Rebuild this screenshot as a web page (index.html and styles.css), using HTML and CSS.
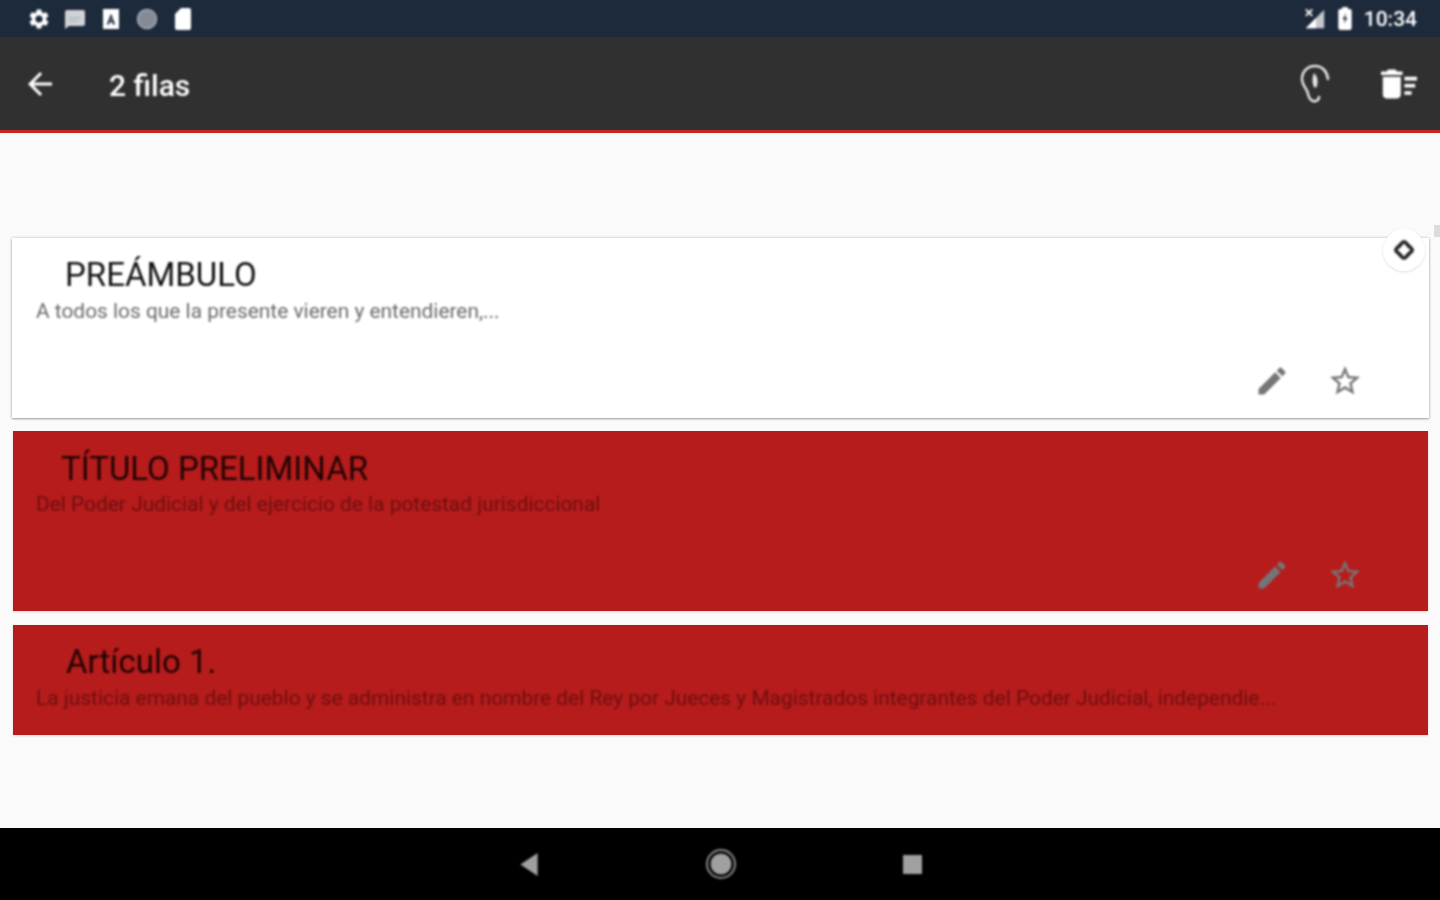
FILE: index.html
```html
<!DOCTYPE html>
<html lang="es">
<head>
    <meta charset="utf-8">
    <meta name="viewport" content="width=device-width, initial-scale=1">
    <title>2 filas</title>
    <link rel="stylesheet" href="styles.css">
</head>
<body>
<div class="screen">

    <div class="statusBar">
        <div class="statusIcons">
            <svg class="statusIcon" viewBox="0 0 24 24"><path fill="#fff" d="M19.14 12.94c.04-.3.06-.61.06-.94s-.02-.64-.07-.94l2.03-1.58a.49.49 0 0 0 .12-.61l-1.92-3.32a.49.49 0 0 0-.59-.22l-2.39.96a7 7 0 0 0-1.62-.94l-.36-2.54a.48.48 0 0 0-.48-.41h-3.84a.47.47 0 0 0-.47.41l-.36 2.54c-.59.24-1.13.57-1.62.94l-2.39-.96a.48.48 0 0 0-.59.22L2.74 8.87a.47.47 0 0 0 .12.61l2.03 1.58c-.05.3-.09.63-.09.94s.02.64.07.94l-2.03 1.58a.49.49 0 0 0-.12.61l1.92 3.32c.12.22.37.29.59.22l2.39-.96c.5.38 1.03.7 1.62.94l.36 2.54c.05.24.24.41.48.41h3.84c.24 0 .44-.17.47-.41l.36-2.54c.59-.24 1.13-.56 1.62-.94l2.39.96c.22.08.47 0 .59-.22l1.92-3.32a.47.47 0 0 0-.12-.61l-2.01-1.58zM12 15.6A3.6 3.6 0 1 1 12 8.4a3.6 3.6 0 0 1 0 7.2z"/></svg>
            <svg class="statusIcon" viewBox="0 0 24 24"><path fill="#cfd2d6" d="M4 3h16c1.1 0 2 .9 2 2v12c0 1.1-.9 2-2 2H6l-4 3V5c0-1.1.9-2 2-2z"/><path fill="#b4b8be" d="M6 10h12v1.5H6zM6 13h9v1.5H6z"/></svg>
            <svg class="statusIcon" viewBox="0 0 24 24"><path fill="#fff" d="M4 2h16v20H4z"/><path fill="#1d2a3c" d="M12 6.5l4.2 11h-2.3l-.8-2.3h-2.3l-.8 2.3H7.800zM12 10.500l-.7 2.900h1.400z"/></svg>
            <svg class="statusIcon" viewBox="0 0 24 24"><circle cx="12" cy="12" r="9.500" fill="#858b96" stroke="#a9adb4" stroke-width="1.500"/></svg>
            <svg class="statusIcon" viewBox="0 0 24 24"><path fill="#fff" d="M10 1h8c1.100 0 2 .9 2 2v18c0 1.100-.9 2-2 2H6c-1.100 0-2-.9-2-2V7z"/></svg>
        </div>
        <div class="statusRight">
            <svg class="signalIcon" viewBox="0 0 24 24"><path fill="#c4c7cc" d="M22 2v20H2z"/><path fill="#fff" d="M2 22L13 11v11z"/><path stroke="#fff" stroke-width="2" d="M2 1.500l7 7M9 1.500l-7 7"/></svg>
            <svg class="batteryIcon" viewBox="0 0 14 24"><path fill="#fff" d="M4 0h6v2h2c1.100 0 2 .9 2 2v18c0 1.100-.9 2-2 2H2c-1.100 0-2-.9-2-2V4c0-1.100.9-2 2-2h2z"/><path fill="#1d2a3c" d="M8 6L4.500 13H7l-1 5 3.500-7H7z"/></svg>
            <span class="clock">10:34</span>
        </div>
    </div>

    <div class="appBar">
        <svg class="backIcon" viewBox="0 0 24 24"><path fill="#fff" d="M20 11H7.830l5.590-5.590L12 4l-8 8 8 8 1.410-1.410L7.830 13H20v-2z"/></svg>
        <h1 class="appTitle">2 filas</h1>
        <svg class="earIcon" viewBox="0 0 30 40"><path fill="none" stroke="#e4e4e4" stroke-width="2.500" stroke-linecap="round" d="M28 15C27 7 22 2 15 2 7 2 2 8 2 15c0 4 2 7 4 10 2 3 2 6 3 8 1.500 3 4 5 7 4 2-.7 3-2 3-4"/><path fill="#e4e4e4" d="M14 9c3 3 4.500 7 3 13-1 2.500-2.500 2-3.500 0C12 18 12 13 14 9z"/></svg>
        <svg class="sweepIcon" viewBox="2 4 20 16"><path fill="#fff" d="M15 16h4v2h-4zm0-8h7v2h-7zm0 4h6v2h-6zM3 18c0 1.100.9 2 2 2h6c1.100 0 2-.9 2-2V8H3v10zM14 5h-3l-1-1H6L5 5H2v2h12z"/></svg>
    </div>

    <div class="content">
        <div class="scrollThumb"></div>

        <div class="card cardTall">
            <h2 class="cardTitle titlePreambulo">PREÁMBULO</h2>
            <p class="cardText">A todos los que la presente vieren y entendieren,...</p>
            <div class="cardActions">
                <svg class="actionIcon" viewBox="0 0 24 24"><path d="M3 17.250V21h3.750L17.810 9.940l-3.750-3.750L3 17.250zM20.710 7.040c.39-.39.39-1.020 0-1.410l-2.340-2.340c-.39-.39-1.020-.39-1.410 0l-1.830 1.830 3.750 3.750 1.830-1.830z"/></svg>
                <svg class="actionIcon" viewBox="0 0 24 24"><path d="M22 9.240l-7.190-.62L12 2 9.190 8.630 2 9.240l5.460 4.730L5.820 21 12 17.270 18.180 21l-1.630-7.030L22 9.240zM12 15.400l-3.760 2.270 1-4.280-3.320-2.880 4.380-.38L12 6.100l1.710 4.040 4.380.38-3.320 2.880 1 4.280L12 15.400z"/></svg>
            </div>
            <div class="reorderButton">
                <svg class="reorderIcon" viewBox="0 0 24 24"><path fill="none" stroke="#222" stroke-width="4" stroke-linejoin="round" d="M12 3c2 0 3 2.500 5 4.500s4 3 4 4.500-2 2.500-4 4.500-3 4.500-5 4.500-3-2.500-5-4.500S3 13.500 3 12s2-2.500 4-4.500S10 3 12 3z"/></svg>
            </div>
        </div>

        <div class="card cardTall cardRed">
            <h2 class="cardTitle titlePreliminar">TÍTULO PRELIMINAR</h2>
            <p class="cardText">Del Poder Judicial y del ejercicio de la potestad jurisdiccional</p>
            <div class="cardActions">
                <svg class="actionIcon" viewBox="0 0 24 24"><path d="M3 17.250V21h3.750L17.810 9.940l-3.750-3.750L3 17.250zM20.710 7.040c.39-.39.39-1.020 0-1.410l-2.340-2.340c-.39-.39-1.020-.39-1.410 0l-1.830 1.830 3.750 3.750 1.830-1.830z"/></svg>
                <svg class="actionIcon" viewBox="0 0 24 24"><path d="M22 9.240l-7.190-.62L12 2 9.190 8.630 2 9.240l5.460 4.730L5.820 21 12 17.270 18.180 21l-1.630-7.030L22 9.240zM12 15.400l-3.760 2.270 1-4.280-3.320-2.880 4.380-.38L12 6.100l1.710 4.040 4.380.38-3.320 2.880 1 4.280L12 15.400z"/></svg>
            </div>
        </div>

        <div class="card cardShort cardRed">
            <h2 class="cardTitle titleArticulo">Artículo 1.</h2>
            <p class="cardText">La justicia emana del pueblo y se administra en nombre del Rey por Jueces y Magistrados integrantes del Poder Judicial, independie...</p>
        </div>
    </div>

    <div class="navBar">
        <svg class="navBack" viewBox="0 0 18 24"><path fill="#a0a0a0" d="M18 0v24L0 12z"/></svg>
        <svg class="navHome" viewBox="0 0 30 30"><circle cx="15" cy="15" r="14" fill="none" stroke="#8c8c8c" stroke-width="2"/><circle cx="15" cy="15" r="10.500" fill="#a0a0a0"/></svg>
        <div class="navSquare"></div>
    </div>

</div>
</body>
</html>
```

FILE: styles.css
```css
* {
    margin: 0;
    padding: 0;
    box-sizing: border-box;
}

body {
    background: #fafafa;
    font-family: Roboto, sans-serif;
    overflow: hidden;
}

/* the source is a soft upscaled capture, so text and icons get a slight blur */
svg,
.clock,
.appTitle,
.cardTitle,
.cardText,
.navSquare {
    filter: blur(0.8px);
}

.screen {
    height: 900px;
    display: flex;
    flex-direction: column;
}

.statusBar {
    height: 37px;
    background: #1d2a3c;
    display: flex;
    align-items: center;
    justify-content: space-between;
    padding: 0 23px 0 27px;
}

.statusIcons {
    display: flex;
    gap: 12px;
}

.statusIcon {
    width: 24px;
    height: 24px;
}

.statusRight {
    display: flex;
    align-items: center;
}

.signalIcon {
    width: 22px;
    height: 22px;
    margin-right: 12px;
}

.batteryIcon {
    width: 14px;
    height: 23px;
    margin-right: 12px;
}

.clock {
    color: #fff;
    font-size: 21px;
    font-weight: 500;
}

.appBar {
    height: 96px;
    background: #303030;
    border-bottom: 3px solid #c62828;
    display: flex;
    align-items: center;
    padding: 0 23px 0 22px;
}

.backIcon {
    width: 36px;
    height: 36px;
}

.appTitle {
    color: #fff;
    font-size: 30px;
    font-weight: 500;
    margin: 3px 0 0 51px;
    flex: 1;
}

.earIcon {
    width: 30px;
    height: 40px;
    margin-right: 51px;
}

.sweepIcon {
    width: 36px;
    height: 30px;
}

.content {
    flex: 1;
    position: relative;
    padding: 105px 11px 0 12px;
    display: flex;
    flex-direction: column;
    gap: 13px;
}

.scrollThumb {
    position: absolute;
    top: 92px;
    right: 0;
    width: 6px;
    height: 12px;
    background: #dcdcdc;
}

.card {
    position: relative;
    background: #fff;
    box-shadow: 0 1px 2px rgba(0, 0, 0, 0.3), 0 0 3px rgba(0, 0, 0, 0.2);
    padding: 17px 0 0 24px;
    display: flex;
    flex-direction: column;
    flex-shrink: 0;
}

.cardTall {
    height: 180px;
}

.cardShort {
    height: 110px;
    margin-top: 1px;
}

.cardRed {
    background: #b71c1c;
    margin-left: 1px;
    margin-right: 1px;
    padding-left: 23px;
    box-shadow: 0 1px 2px rgba(0, 0, 0, 0.15);
}

.cardRed.cardTall {
    padding-top: 18px;
}

.cardRed.cardTall .cardText {
    margin-top: 2px;
}

.cardTitle {
    font-size: 33px;
    font-weight: 400;
    line-height: 40px;
    color: #111;
}

.titlePreambulo {
    margin-left: 29px;
}

.titlePreliminar {
    margin-left: 25px;
}

.titleArticulo {
    margin-left: 30px;
}

.cardRed .cardTitle {
    color: #200404;
}

.cardText {
    font-size: 20.9px;
    line-height: 26px;
    margin-top: 3px;
    color: #6a6a6a;
    white-space: nowrap;
}

.cardRed .cardText {
    color: #6c0f0f;
}

.cardActions {
    margin-top: auto;
    padding: 0 66px 19px 0;
    display: flex;
    justify-content: flex-end;
    gap: 37px;
}

.cardRed .cardActions {
    padding: 0 65px 18px 0;
}

.actionIcon {
    width: 36px;
    height: 36px;
    fill: #757575;
}

.reorderButton {
    position: absolute;
    top: -9px;
    right: 4px;
    width: 42px;
    height: 42px;
    border-radius: 50%;
    background: #fff;
    box-shadow: 0 1px 3px rgba(0, 0, 0, 0.12);
    display: flex;
    align-items: center;
    justify-content: center;
}

.reorderIcon {
    width: 22px;
    height: 22px;
}

.navBar {
    height: 72px;
    background: #000;
    display: flex;
    align-items: center;
    justify-content: center;
    gap: 167.5px;
    padding-left: 2px;
}

.navBack {
    width: 18px;
    height: 23px;
}

.navHome {
    width: 30px;
    height: 30px;
}

.navSquare {
    width: 19px;
    height: 19px;
    background: #a0a0a0;
}
```
